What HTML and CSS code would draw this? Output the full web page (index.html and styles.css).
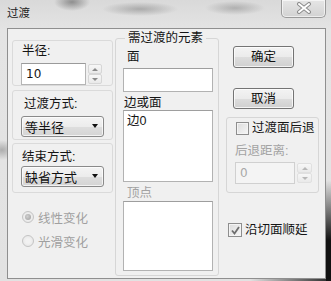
FILE: index.html
```html
<!DOCTYPE html>
<html>
<head>
<meta charset="utf-8">
<link rel="stylesheet" href="styles.css">
</head>
<body>
<div class="window">
  <div class="titlebar">
    <span class="title">过渡</span>
    <div class="close">
      <svg width="16" height="12" viewBox="0 0 16 12">
        <path d="M3 2 L13 10 M13 2 L3 10" stroke="#8c8c8c" stroke-width="4" stroke-linecap="round"/>
        <path d="M3 2 L13 10 M13 2 L3 10" stroke="#ffffff" stroke-width="2" stroke-linecap="round"/>
      </svg>
    </div>
  </div>
  <div class="client">
    <div class="col-left">
      <div class="panel p1">
        <div class="lbl">半径:</div>
        <div class="numrow">
          <div class="edit">10</div>
          <div class="spin"><span class="up"></span><span class="down"></span></div>
        </div>
      </div>
      <div class="panel p2">
        <div class="lbl">过渡方式:</div>
        <div class="combo">等半径<i class="arrow"></i></div>
      </div>
      <div class="panel p3">
        <div class="lbl">结束方式:</div>
        <div class="combo">缺省方式<i class="arrow"></i></div>
      </div>
      <div class="radios">
        <div class="radio"><span class="rb on"></span>线性变化</div>
        <div class="radio"><span class="rb"></span>光滑变化</div>
      </div>
    </div>
    <fieldset class="elements">
      <legend>需过渡的元素</legend>
      <div class="mlbl m1">面</div>
      <div class="box tb"></div>
      <div class="mlbl m2">边或面</div>
      <div class="box lb1">边0</div>
      <div class="mlbl m3 dis">顶点</div>
      <div class="box lb2"></div>
    </fieldset>
    <div class="col-right">
      <button class="btn b1">确定</button>
      <button class="btn b2">取消</button>
      <div class="group">
        <div class="chk"><span class="cb"></span>过渡面后退</div>
        <div class="glbl dis">后退距离:</div>
        <div class="numrow">
          <div class="edit small dis">0</div>
          <div class="spin dis"><span class="up"></span><span class="down"></span></div>
        </div>
      </div>
      <div class="chk c2"><span class="cb checked"><svg width="11" height="11" viewBox="0 0 11 11"><path d="M2 5.5 L4.5 8.5 L9 2" fill="none" stroke="#6e6e6e" stroke-width="1.8"/></svg></span>沿切面顺延</div>
    </div>
  </div>
</div>
</body>
</html>
```
FILE: styles.css
```css
* { box-sizing: border-box; margin: 0; padding: 0; }
html, body { width: 331px; height: 281px; overflow: hidden; }
body {
  font-family: "Liberation Sans", "Noto Sans CJK SC", sans-serif;
  font-size: 12.5px;
  color: #151515;
  background: #dcdcdc;
}
.window {
  width: 331px;
  height: 281px;
  background:
    linear-gradient(to right, rgba(0,0,0,0) 0, rgba(20,20,20,0.9) 100%) 250px 279px / 81px 2px no-repeat,
    linear-gradient(rgba(0,0,0,0) 0, #111 60%) 326px 180px / 5px 101px no-repeat,
    radial-gradient(ellipse 18px 9px at 72px 2px, rgba(80,80,80,0.55), rgba(80,80,80,0)),
    radial-gradient(ellipse 38px 7px at 140px 9px, rgba(110,110,110,0.45), rgba(110,110,110,0)),
    radial-gradient(ellipse 30px 7px at 235px 8px, rgba(110,110,110,0.4), rgba(110,110,110,0)),
    radial-gradient(ellipse 14px 10px at 2px 150px, rgba(120,120,120,0.5), rgba(120,120,120,0)),
    linear-gradient(#d9d9d9, #e4e4e4 30px, #e2e2e2);
}
.titlebar {
  height: 28px;
  display: flex;
  justify-content: space-between;
  align-items: flex-start;
  padding-left: 7px;
}
.title { margin-top: 6px; font-size: 11.5px; line-height: 15px; color: #222; }
.close {
  width: 45px;
  height: 18px;
  margin-right: 5px;
  border: 1px solid #9a9a9a;
  border-top: none;
  border-radius: 0 0 5px 5px;
  background: linear-gradient(#e6e6e6, #d2d2d2);
  box-shadow: inset 0 0 0 1px rgba(255,255,255,0.6);
  display: flex;
  align-items: center;
  justify-content: center;
  padding-bottom: 1px;
}
.client {
  margin-left: 7px;
  width: 319px;
  height: 251px;
  border: 1px solid #8f8f8f;
  background: #f0f0f0;
  display: flex;
  align-items: flex-start;
}
/* left column */
.col-left { width: 101px; margin-left: 4px; margin-top: 11px; display: flex; flex-direction: column; }
.panel {
  border: 1px solid #dadada;
  border-radius: 3px;
  padding-left: 8px;
}
.p1 { height: 46px; }
.p2 { height: 50px; margin-top: 4px; }
.p3 { height: 50px; margin-top: 3px; }
.lbl { line-height: 16px; height: 16px; padding-left: 1px; }
.p1 .lbl { margin-top: 2px; }
.p2 .lbl { margin-top: 5px; padding-left: 3px; }
.p3 .lbl { margin-top: 5px; padding-left: 1px; }
.numrow { display: flex; align-items: flex-start; }
.p1 .numrow { margin-top: 4px; }
.edit {
  width: 65px;
  height: 22px;
  border: 1px solid #b5b5b5;
  border-top-color: #9a9a9a;
  background: #fff;
  font-family: "DejaVu Sans", sans-serif;
  font-size: 12px;
  line-height: 20px;
  padding-left: 4px;
}
.edit.small { width: 60px; }
.edit.dis { background: #f4f4f4; border-color: #d0d0d0; color: #a8a8a8; }
.spin { width: 14px; margin-left: 2px; margin-top: 1px; display: flex; flex-direction: column; }
.spin span {
  height: 10px;
  border: 1px solid #d6d6d6;
  border-radius: 2px;
  background: linear-gradient(#f7f7f7, #e9e9e9);
  display: flex;
  align-items: center;
  justify-content: center;
}
.spin .up::before {
  content: "";
  border-left: 3px solid transparent;
  border-right: 3px solid transparent;
  border-bottom: 3px solid #8a8a8a;
}
.spin .down::before {
  content: "";
  border-left: 3px solid transparent;
  border-right: 3px solid transparent;
  border-top: 3px solid #8a8a8a;
}
.spin.dis { width: 15px; }
.spin.dis span { border-color: #e0e0e0; }
.spin.dis .up::before { border-bottom-color: #b8b8b8; }
.spin.dis .down::before { border-top-color: #b8b8b8; }
.combo {
  width: 83px;
  height: 21px;
  border: 1px solid #8a8a8a;
  border-radius: 3px;
  background: linear-gradient(#f4f4f4 0%, #ececec 50%, #dedede 51%, #d4d4d4 100%);
  box-shadow: inset 0 0 0 1px rgba(255,255,255,0.7);
  display: flex;
  align-items: center;
  justify-content: space-between;
  padding: 0 5px 1px 3px;
  font-size: 13px;
  color: #111;
}
.p2 .combo { margin-top: 4px; }
.p3 .combo { margin-top: 1px; }
.arrow {
  width: 0; height: 0;
  border-left: 3.5px solid transparent;
  border-right: 3.5px solid transparent;
  border-top: 4px solid #111;
}
.radios { margin-top: 12px; padding-left: 10px; }
.radio { height: 24px; display: flex; align-items: center; color: #a0a0a0; }
.rb {
  width: 12px; height: 12px;
  border: 1px solid #c4c4c4;
  border-radius: 50%;
  background: radial-gradient(circle, #f2f2f2 30%, #e2e2e2 100%);
  margin-right: 4px;
  display: flex; align-items: center; justify-content: center;
}
.rb.on::before {
  content: "";
  width: 6px; height: 6px; border-radius: 50%;
  background: radial-gradient(circle at 40% 40%, #d0d0d0, #9c9c9c);
}
/* middle */
.elements {
  width: 104px;
  margin-left: 2px;
  margin-top: 2px;
  border: 1px solid #d6d6d6;
  border-radius: 3px;
  padding: 0 5px 4px 7px;
  min-width: 0;
}
.elements legend {
  line-height: 14px;
  margin-left: 2px;
  padding: 0 3px;
}
.mlbl { line-height: 14px; height: 14px; padding-left: 1px; }
.m1 { margin-top: 5px; padding-left: 4px; }
.m2 { margin-top: 4px; }
.m3 { margin-top: 4px; padding-left: 4px; }
.dis { color: #a3a3a3; }
.box {
  width: 90px;
  border: 1px solid #b2b2b2;
  border-top-color: #9e9e9e;
  background: #fff;
}
.tb { height: 24px; margin-top: 4px; }
.lb1 { height: 72px; margin-top: 0; padding: 2px 3px; line-height: 16px; }
.lb2 { height: 70px; margin-top: 1px; }
/* right */
.col-right { width: 93px; margin-left: 7px; display: flex; flex-direction: column; align-items: flex-start; }
.btn {
  width: 61px;
  margin-left: 7px;
  border: 1px solid #747474;
  border-radius: 3px;
  background: linear-gradient(#f3f3f3 0%, #ebebeb 50%, #dddddd 51%, #d0d0d0 100%);
  box-shadow: inset 0 0 0 1px rgba(255,255,255,0.75);
  font-family: "Liberation Sans", "Noto Sans CJK SC", sans-serif;
  font-size: 12.5px;
  color: #111;
  line-height: 16px;
  padding: 0;
}
.b1 { height: 22px; margin-top: 17px; }
.b2 { height: 21px; margin-top: 20px; }
.group {
  width: 93px;
  height: 76px;
  margin-top: 8px;
  border: 1px solid #d6d6d6;
  border-radius: 3px;
  padding-left: 8px;
}
.chk { display: flex; align-items: center; height: 16px; line-height: 16px; }
.group .chk { margin-top: 2px; margin-left: 1px; }
.cb {
  width: 13px; height: 13px;
  border: 1px solid #8e8e8e;
  background: linear-gradient(135deg, #dcdcdc, #f6f6f6);
  box-shadow: inset 0 0 0 1px #f4f4f4;
  margin-right: 3px;
  display: flex; align-items: center; justify-content: center;
}
.glbl { line-height: 16px; height: 16px; margin-top: 7px; }
.group .numrow { margin-top: 3px; }
.group .spin { margin-left: 2px; }
.c2 { margin-top: 29px; margin-left: 2px; }
.c2 .cb { width: 14px; height: 14px; }
```
